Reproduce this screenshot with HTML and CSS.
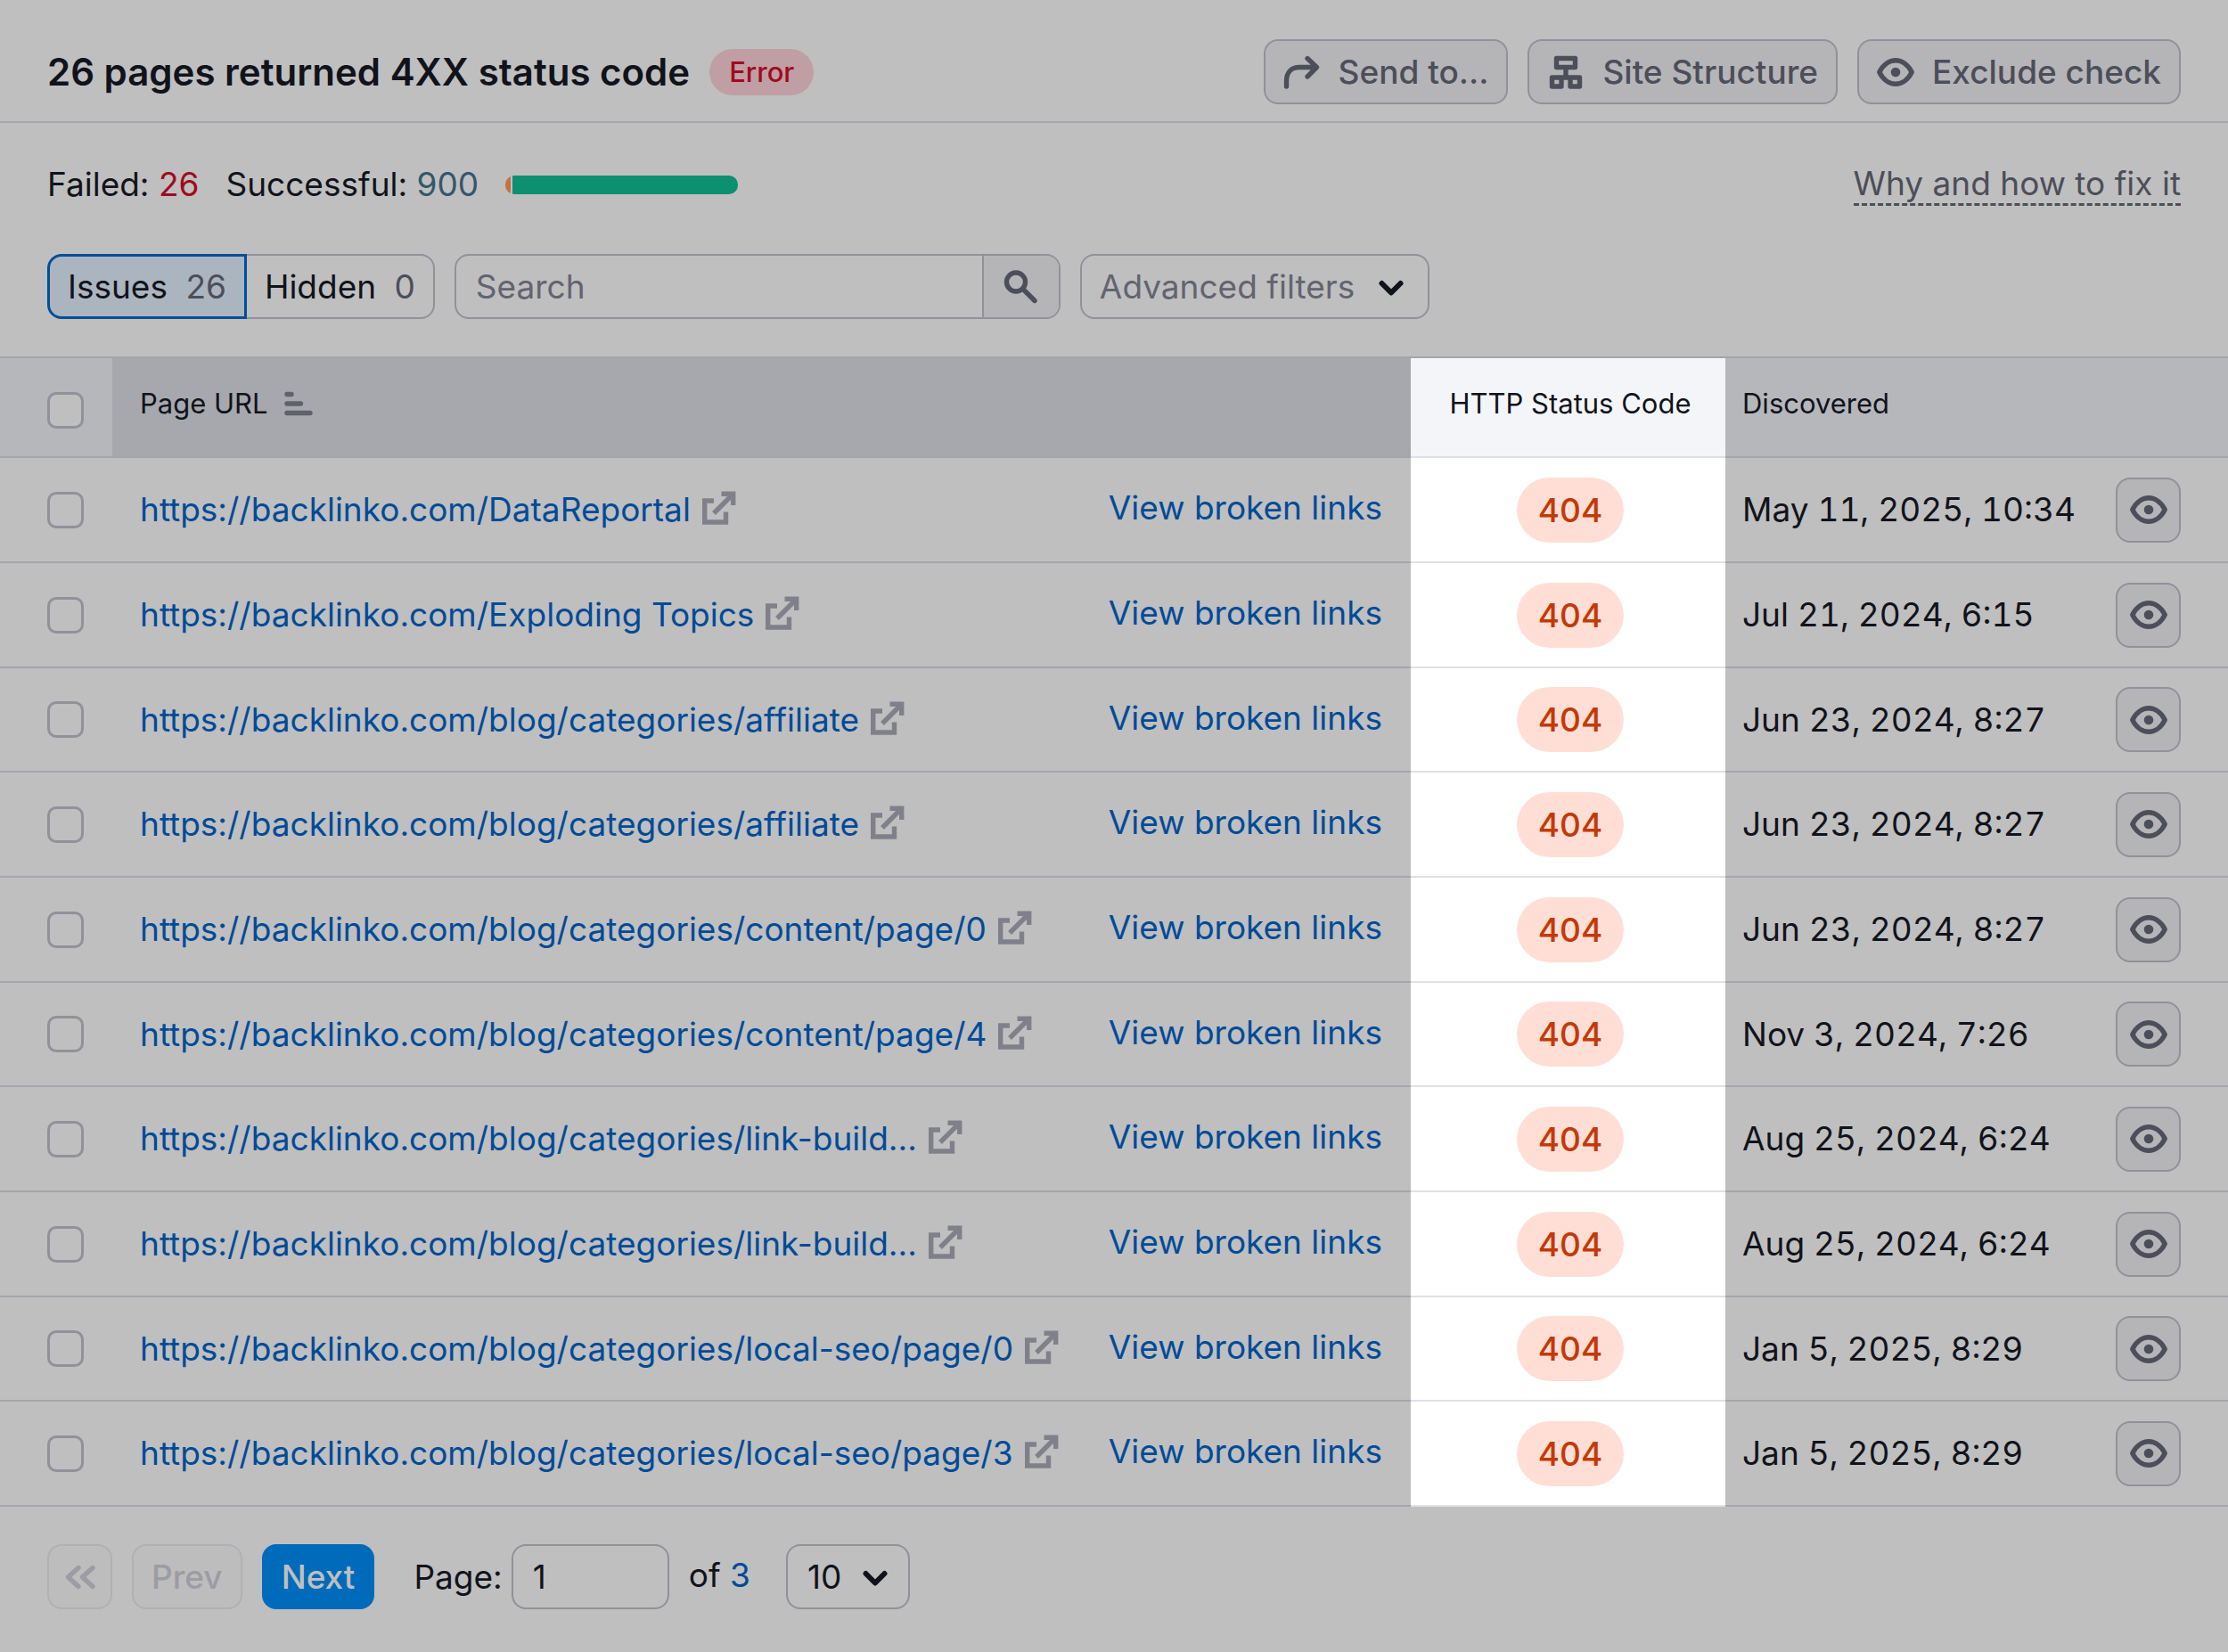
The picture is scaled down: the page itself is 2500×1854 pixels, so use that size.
FILE: index.html
```
<!DOCTYPE html>
<html lang="en">
<head>
  <meta charset="UTF-8">
  <title>26 pages returned 4XX status code</title>
  <link rel="stylesheet" href="styles.css">
</head>
<body>

  <svg class="sprite" aria-hidden="true">
    <symbol id="send" viewBox="0 0 42 42">
      <path d="M3.5 37V31C3.5 21 9 15.5 18 15.5H37M27 5.5L37.5 15.5L27 26"/>
    </symbol>
    <symbol id="structure" viewBox="0 0 42 42">
      <path d="M10.5 5.5H31.5V15.5H10.5ZM5.5 27H16V37H5.5ZM26 27H36.5V37H26ZM21 16V27M16 27H26"/>
    </symbol>
    <symbol id="eye" viewBox="0 0 42 42">
      <path d="M2.8 21C7 12.5 14 7.8 21 7.8S35 12.5 39.2 21C35 29.5 28 34.2 21 34.2S7 29.5 2.8 21Z"/>
      <circle class="solid" cx="21" cy="21" r="5.3"/>
    </symbol>
    <symbol id="search" viewBox="0 0 42 42">
      <path d="M25.5 15.5A10.5 10.5 0 1 1 4.5 15.5A10.5 10.5 0 1 1 25.5 15.5ZM23 23.5L36 36.5"/>
    </symbol>
    <symbol id="chevron" viewBox="0 0 42 42">
      <path d="M10.5 17L21 27.5L31.5 17"/>
    </symbol>
    <symbol id="first" viewBox="0 0 42 42">
      <path d="M19 10.5L7.5 21L19 31.5M35 10.5L23.5 21L35 31.5"/>
    </symbol>
    <symbol id="sort" viewBox="0 0 42 42">
      <path d="M8 10.5H13M8 21H23.5M8 31.5H34"/>
    </symbol>
    <symbol id="external" viewBox="0 0 42 42">
      <path d="M15 11H4.7V35H28.5V23.5"/>
      <path d="M15 25L36 4M23.5 3.3H36.7V16"/>
    </symbol>
  </svg>

  <main class="report">
    <header class="report-header">
      <h1>26 pages returned 4XX status code</h1>
      <span class="tag-error">Error</span>
      <div class="actions">
        <button class="btn"><svg class="icon"><use href="#send"/></svg>Send to...</button>
        <button class="btn"><svg class="icon"><use href="#structure"/></svg>Site Structure</button>
        <button class="btn"><svg class="icon"><use href="#eye"/></svg>Exclude check</button>
      </div>
    </header>

    <section class="summary">
      <span>Failed: <span class="failed">26</span></span>
      <span>Successful: <span class="passed">900</span></span>
      <div class="bar"><span class="bar-failed"></span><span class="bar-passed"></span></div>
      <a class="hint" href="#">Why and how to fix it</a>
    </section>

    <section class="filters">
      <div class="tabs">
        <button class="tab active">Issues <span class="count">26</span></button>
        <button class="tab">Hidden <span class="count">0</span></button>
      </div>
      <form class="search">
        <input type="text" placeholder="Search" aria-label="Search">
        <button type="button" aria-label="Run search"><svg class="icon"><use href="#search"/></svg></button>
      </form>
      <button class="btn btn-filter">Advanced filters<svg class="icon chevron"><use href="#chevron"/></svg></button>
    </section>

    <table class="pages">
      <thead>
        <tr>
          <th class="col-check"><input type="checkbox" aria-label="Select all"></th>
          <th class="col-url"><div class="sorted">Page URL <svg class="icon"><use href="#sort"/></svg></div></th>
          <th class="col-status">HTTP Status Code</th>
          <th class="col-date">Discovered</th>
        </tr>
      </thead>
      <tbody>
        <tr>
          <td class="col-check"><input type="checkbox" aria-label="Select page"></td>
          <td class="col-url"><div class="url"><a href="#">https://backlinko.com/DataReportal</a><svg class="icon"><use href="#external"/></svg><a class="broken" href="#">View broken links</a></div></td>
          <td class="col-status"><span class="code">404</span></td>
          <td class="col-date"><div class="date">May 11, 2025, 10:34<button class="btn btn-icon" aria-label="Hide page"><svg class="icon"><use href="#eye"/></svg></button></div></td>
        </tr>
        <tr>
          <td class="col-check"><input type="checkbox" aria-label="Select page"></td>
          <td class="col-url"><div class="url"><a href="#">https://backlinko.com/Exploding Topics</a><svg class="icon"><use href="#external"/></svg><a class="broken" href="#">View broken links</a></div></td>
          <td class="col-status"><span class="code">404</span></td>
          <td class="col-date"><div class="date">Jul 21, 2024, 6:15<button class="btn btn-icon" aria-label="Hide page"><svg class="icon"><use href="#eye"/></svg></button></div></td>
        </tr>
        <tr>
          <td class="col-check"><input type="checkbox" aria-label="Select page"></td>
          <td class="col-url"><div class="url"><a href="#">https://backlinko.com/blog/categories/affiliate</a><svg class="icon"><use href="#external"/></svg><a class="broken" href="#">View broken links</a></div></td>
          <td class="col-status"><span class="code">404</span></td>
          <td class="col-date"><div class="date">Jun 23, 2024, 8:27<button class="btn btn-icon" aria-label="Hide page"><svg class="icon"><use href="#eye"/></svg></button></div></td>
        </tr>
        <tr>
          <td class="col-check"><input type="checkbox" aria-label="Select page"></td>
          <td class="col-url"><div class="url"><a href="#">https://backlinko.com/blog/categories/affiliate</a><svg class="icon"><use href="#external"/></svg><a class="broken" href="#">View broken links</a></div></td>
          <td class="col-status"><span class="code">404</span></td>
          <td class="col-date"><div class="date">Jun 23, 2024, 8:27<button class="btn btn-icon" aria-label="Hide page"><svg class="icon"><use href="#eye"/></svg></button></div></td>
        </tr>
        <tr>
          <td class="col-check"><input type="checkbox" aria-label="Select page"></td>
          <td class="col-url"><div class="url"><a href="#">https://backlinko.com/blog/categories/content/page/0</a><svg class="icon"><use href="#external"/></svg><a class="broken" href="#">View broken links</a></div></td>
          <td class="col-status"><span class="code">404</span></td>
          <td class="col-date"><div class="date">Jun 23, 2024, 8:27<button class="btn btn-icon" aria-label="Hide page"><svg class="icon"><use href="#eye"/></svg></button></div></td>
        </tr>
        <tr>
          <td class="col-check"><input type="checkbox" aria-label="Select page"></td>
          <td class="col-url"><div class="url"><a href="#">https://backlinko.com/blog/categories/content/page/4</a><svg class="icon"><use href="#external"/></svg><a class="broken" href="#">View broken links</a></div></td>
          <td class="col-status"><span class="code">404</span></td>
          <td class="col-date"><div class="date">Nov 3, 2024, 7:26<button class="btn btn-icon" aria-label="Hide page"><svg class="icon"><use href="#eye"/></svg></button></div></td>
        </tr>
        <tr>
          <td class="col-check"><input type="checkbox" aria-label="Select page"></td>
          <td class="col-url"><div class="url"><a href="#">https://backlinko.com/blog/categories/link-build...</a><svg class="icon"><use href="#external"/></svg><a class="broken" href="#">View broken links</a></div></td>
          <td class="col-status"><span class="code">404</span></td>
          <td class="col-date"><div class="date">Aug 25, 2024, 6:24<button class="btn btn-icon" aria-label="Hide page"><svg class="icon"><use href="#eye"/></svg></button></div></td>
        </tr>
        <tr>
          <td class="col-check"><input type="checkbox" aria-label="Select page"></td>
          <td class="col-url"><div class="url"><a href="#">https://backlinko.com/blog/categories/link-build...</a><svg class="icon"><use href="#external"/></svg><a class="broken" href="#">View broken links</a></div></td>
          <td class="col-status"><span class="code">404</span></td>
          <td class="col-date"><div class="date">Aug 25, 2024, 6:24<button class="btn btn-icon" aria-label="Hide page"><svg class="icon"><use href="#eye"/></svg></button></div></td>
        </tr>
        <tr>
          <td class="col-check"><input type="checkbox" aria-label="Select page"></td>
          <td class="col-url"><div class="url"><a href="#">https://backlinko.com/blog/categories/local-seo/page/0</a><svg class="icon"><use href="#external"/></svg><a class="broken" href="#">View broken links</a></div></td>
          <td class="col-status"><span class="code">404</span></td>
          <td class="col-date"><div class="date">Jan 5, 2025, 8:29<button class="btn btn-icon" aria-label="Hide page"><svg class="icon"><use href="#eye"/></svg></button></div></td>
        </tr>
        <tr>
          <td class="col-check"><input type="checkbox" aria-label="Select page"></td>
          <td class="col-url"><div class="url"><a href="#">https://backlinko.com/blog/categories/local-seo/page/3</a><svg class="icon"><use href="#external"/></svg><a class="broken" href="#">View broken links</a></div></td>
          <td class="col-status"><span class="code">404</span></td>
          <td class="col-date"><div class="date">Jan 5, 2025, 8:29<button class="btn btn-icon" aria-label="Hide page"><svg class="icon"><use href="#eye"/></svg></button></div></td>
        </tr>
      </tbody>
    </table>

    <footer class="pager">
      <button class="btn btn-icon" disabled aria-label="First page"><svg class="icon"><use href="#first"/></svg></button>
      <button class="btn" disabled>Prev</button>
      <button class="btn btn-next">Next</button>
      <label for="page">Page:</label>
      <input class="page-input" id="page" type="text" value="1">
      <span class="total">of <a href="#">3</a></span>
      <div class="select">
        <select aria-label="Rows per page">
          <option>10</option>
          <option>50</option>
          <option>100</option>
        </select>
        <svg class="icon chevron"><use href="#chevron"/></svg>
      </div>
    </footer>
  </main>

</body>
</html>
```

FILE: styles.css
```
* {
  box-sizing: border-box;
}

body {
  margin: 0;
  background: #bfbfbf;
  color: #11131b;
  font-family: Inter, "Liberation Sans", sans-serif;
  font-size: 37px;
  line-height: 52px;
}

a {
  color: #004b98;
  text-decoration: none;
}

button, input, select {
  font: inherit;
  color: inherit;
  margin: 0;
}

.sprite {
  display: none;
}

.icon {
  width: 42px;
  height: 42px;
  flex: none;
  fill: none;
  stroke: #4c4e59;
  stroke-width: 5.4;
  stroke-linecap: round;
  stroke-linejoin: round;
}

.solid {
  fill: #4c4e59;
  stroke: none;
}

.chevron {
  stroke: #11131b;
  stroke-width: 6;
}

/* buttons */

.btn {
  display: flex;
  align-items: center;
  justify-content: center;
  gap: 20px;
  height: 73px;
  padding: 0 20px;
  border: 2px solid #91919a;
  border-radius: 16px;
  background: #b5b5b8;
  color: #4c4e59;
  font-weight: 500;
  white-space: nowrap;
}

.btn-icon {
  width: 73px;
  padding: 0;
}

.btn-filter {
  background: transparent;
  color: #62646f;
  font-weight: 400;
}

.btn:disabled {
  border-color: #b0b0b5;
  background: #bdbdbd;
  color: #9c9ca3;
}

.btn:disabled .icon {
  stroke: #9c9ca3;
}

.btn-next {
  border-color: #006bbb;
  background: #006bbb;
  color: #bfbfbf;
}

/* header */

.report-header {
  display: flex;
  align-items: center;
  padding: 44px 53px 19px;
  border-bottom: 2px solid #a5a5ac;
}

h1 {
  margin: 0;
  font-size: 42px;
  font-weight: 600;
}

.tag-error {
  margin-left: 22px;
  padding: 0 22px;
  border-radius: 26px;
  background: #bf9fa4;
  color: #a00a1e;
  font-size: 31px;
  font-weight: 500;
}

.actions {
  display: flex;
  gap: 22px;
  margin-left: auto;
}

/* summary and filters */

.summary {
  display: flex;
  align-items: center;
  gap: 30px;
  padding: 43px 53px;
}

.failed {
  color: #a00a1e;
}

.passed {
  color: #36566b;
}

.bar {
  display: flex;
  gap: 2px;
  width: 261px;
  height: 21px;
  border-radius: 10px;
  overflow: hidden;
}

.bar-failed {
  width: 6px;
  background: #c9703f;
}

.bar-passed {
  flex: 1;
  background: #0d906f;
}

.hint {
  margin-left: auto;
  border-bottom: 3px dashed #4c4e59;
  color: #4c4e59;
  line-height: 44px;
}

.filters {
  display: flex;
  gap: 22px;
  padding: 9px 53px 42px;
}

.tabs {
  display: flex;
}

.tab {
  height: 73px;
  padding: 0 20px;
  border: 2px solid #91919a;
  border-left: 0;
  border-radius: 0 16px 16px 0;
  background: transparent;
}

.tab.active {
  border: 3px solid #004f99;
  border-radius: 16px 0 0 16px;
  background: #abb5bf;
}

.count {
  margin-left: 10px;
  color: #4c4e59;
}

.search {
  display: flex;
  width: 680px;
  height: 73px;
  border: 2px solid #91919a;
  border-radius: 16px;
  overflow: hidden;
}

.search input {
  flex: 1;
  min-width: 0;
  padding: 0 22px;
  border: 0;
  background: transparent;
}

.search input::placeholder {
  color: #62646f;
  opacity: 1;
}

.search button {
  display: flex;
  align-items: center;
  justify-content: center;
  width: 86px;
  padding: 0;
  border: 0;
  border-left: 2px solid #91919a;
  background: #b5b5b8;
}

/* table */

.pages {
  width: 100%;
  table-layout: fixed;
  border-collapse: separate;
  border-spacing: 0;
  border-top: 2px solid #a5a5ac;
}

.pages th {
  height: 112px;
  padding: 0 0 8px;
  border-bottom: 2px solid #a5a5ac;
  background: #b6b7bb;
  font-size: 31px;
  font-weight: 400;
  text-align: left;
}

.pages td {
  height: 118px;
  padding: 0;
  border-bottom: 2px solid #a5a5ac;
}

.pages tr:nth-child(3n) td {
  height: 117px;
}

.pages .col-check {
  width: 126px;
  padding-left: 53px;
}

.pages th.col-check {
  padding-top: 6px;
  padding-bottom: 0;
}

.pages .col-url {
  padding-left: 31px;
  padding-right: 32px;
}

.pages th.col-url {
  background: #a7a8ad;
}

.pages .col-status {
  width: 353px;
  padding-left: 5px;
  border-color: #dfe0e8;
  background: #fff;
  text-align: center;
}

.pages th.col-status {
  background: #f4f5f9;
}

.pages .col-date {
  width: 564px;
  padding-left: 19px;
  padding-right: 53px;
}

.pages input {
  display: block;
  appearance: none;
  width: 41px;
  height: 41px;
  border: 3px solid #91919a;
  border-radius: 10px;
  background: #bfbfbf;
}

.sorted {
  display: flex;
  align-items: center;
  gap: 13px;
}

.sorted .icon {
  stroke: #5f616b;
}

.url {
  display: flex;
  align-items: center;
  gap: 11px;
}

.url .icon {
  stroke: #80808a;
  stroke-linejoin: miter;
  stroke-linecap: butt;
}

.broken {
  margin-left: auto;
  padding-bottom: 4px;
}

.code {
  display: inline-block;
  padding: 0 24px;
  border-radius: 37px;
  background: #ffdfd5;
  color: #c33909;
  font-weight: 500;
  line-height: 73px;
  vertical-align: middle;
}

.date {
  display: flex;
  align-items: center;
  justify-content: space-between;
  font-variant-numeric: tabular-nums;
}

/* pager */

.pager {
  display: flex;
  align-items: center;
  gap: 22px;
  padding: 42px 53px 48px;
}

.pager label {
  margin-left: 22px;
}

.page-input {
  width: 177px;
  height: 73px;
  margin-left: -12px;
  padding: 0 22px;
  border: 2px solid #91919a;
  border-radius: 16px;
  background: transparent;
}

.total a {
  display: inline-block;
  padding-bottom: 4px;
}

.select {
  display: grid;
  align-items: center;
  margin-left: 18px;
}

.select select {
  grid-area: 1 / 1;
  appearance: none;
  width: 139px;
  height: 73px;
  padding: 0 22px;
  border: 2px solid #91919a;
  border-radius: 16px;
  background: transparent;
}

.select .icon {
  grid-area: 1 / 1;
  justify-self: end;
  margin-right: 18px;
  pointer-events: none;
}
```
